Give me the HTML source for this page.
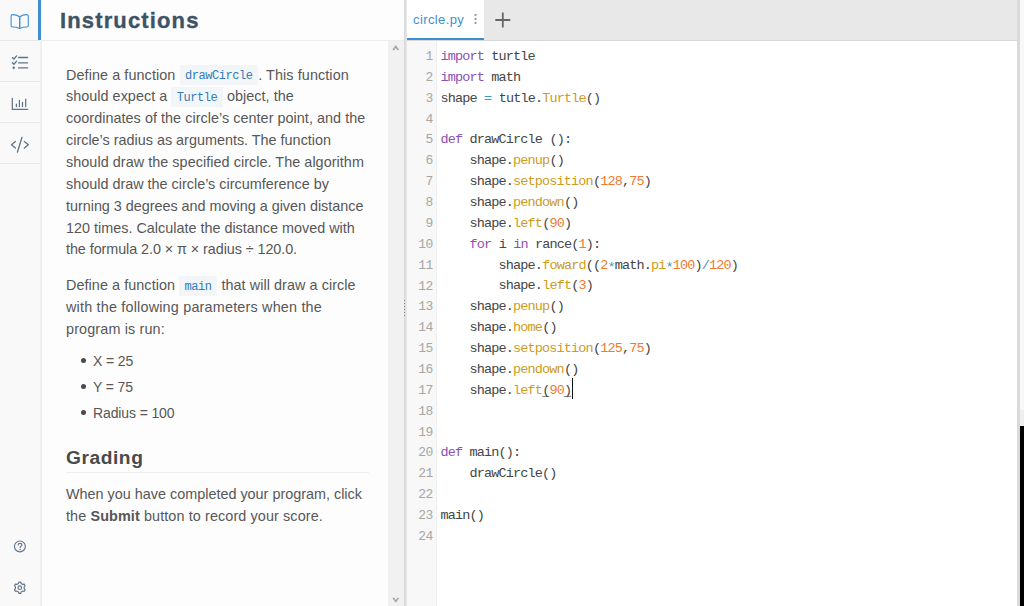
<!DOCTYPE html>
<html><head><meta charset="utf-8">
<style>
*{box-sizing:border-box;margin:0;padding:0}
html,body{width:1024px;height:606px;overflow:hidden;background:#fff;position:relative}
body{font-family:"Liberation Sans",sans-serif}
.abs{position:absolute}
/* sidebar */
#side{left:0;top:0;width:40px;height:606px;background:#f9f9f9}
#sideb{left:40px;top:41px;width:2px;height:565px;background:#efefef}
.sep{position:absolute;left:0;width:40px;height:1px;background:#e6e6e6}
#active{left:38px;top:0;width:3px;height:40px;background:#3d8fd1}
/* instructions */
#panel{left:42px;top:41px;width:346px;height:565px;background:#fdfdfd}
#phead{left:41px;top:0;width:363px;height:40px;background:#fdfdfd}
#pheadb{left:41px;top:40px;width:363px;height:1px;background:#e9eff2}
#title{left:60px;top:5.1px;font-weight:bold;font-size:22px;letter-spacing:1.14px;-webkit-text-stroke:0.35px #3e5366;color:#3e5366;line-height:32px;white-space:nowrap}
.ln.li{left:93px;font-size:14px;letter-spacing:-0.12px}
.ln{position:absolute;left:66px;font-size:14.4px;line-height:22px;height:22px;color:#575757;white-space:nowrap}
.ic{font-family:"Liberation Mono",monospace;font-size:12px;letter-spacing:-0.45px;color:#2f7bbd;background:#f3f6f9;padding:4.2px 5.8px 1.3px 5.4px}
/* scrollbar */
#track{left:388px;top:41px;width:16px;height:565px;background:#f1f1f1}
#div1{left:404px;top:0;width:3px;height:606px;background:linear-gradient(90deg,#d8d8d8,#dedede 50%,#ececec)}
/* editor */
#tabbar{left:406px;top:0;width:611px;height:40px;background:#e8e8e8}
#tabbarb{left:406px;top:40px;width:611px;height:1px;background:#d8d8d8}
#tab{left:406px;top:0;width:78px;height:40px;background:#fff}
#tabline{left:406px;top:37.5px;width:78px;height:2.5px;background:#3d8fd1}
#tabname{left:413px;top:10.6px;font-size:13px;letter-spacing:0.39px;line-height:18px;color:#3d8fd1;white-space:nowrap}
#editor{left:406px;top:41px;width:611px;height:565px;background:#fff}
#gutter{left:406px;top:41px;width:31px;height:565px;background:#f8f8f8;border-right:1px solid #efefef}
#div2{left:1017px;top:0;width:3px;height:606px;background:#dadada}
#rstrip{left:1020px;top:0;width:4px;height:606px;background:#f8f8f8}
.cl{position:absolute;left:440.6px;font-family:"Liberation Mono",monospace;font-size:13.5px;letter-spacing:-0.85px;line-height:21px;height:21px;color:#454545;white-space:pre}
.gn{position:absolute;left:406px;width:26.6px;text-align:right;font-family:"Liberation Mono",monospace;font-size:13px;letter-spacing:-0.6px;line-height:21px;height:21px;color:#a6a6a6;white-space:pre}
.bul{position:absolute;left:80.5px;width:5px;height:5px;border-radius:50%;background:#4a4a4a}
#grading{left:66px;font-weight:bold;font-size:19.2px;letter-spacing:0.55px;line-height:24px;color:#4a4a4a;white-space:nowrap}
#gradeb{left:66px;top:472px;width:303px;height:1px;background:#eeeeee}
.cur{display:inline-block;width:0;height:0;position:relative}
.cur::after{content:"";position:absolute;left:0.8px;top:-16px;width:1.2px;height:20.8px;background:#111}
.k{color:#8a50b6}
.m{color:#cc9c1c}
.n{color:#ee7b2f}
.o{color:#3b9ac4}
.st{position:relative;top:2px}
.ul{text-decoration:underline;text-decoration-color:#8a8a8a;text-underline-offset:2px;text-decoration-skip-ink:none}
</style></head>
<body>
<div id="side" class="abs"></div>
<div id="sideb" class="abs"></div>
<div class="sep" style="top:40px"></div>
<div class="sep" style="top:81px"></div>
<div class="sep" style="top:122px"></div>
<div class="sep" style="top:163px"></div>
<div id="active" class="abs"></div>

<div id="phead" class="abs"></div>
<div id="pheadb" class="abs"></div>
<div id="panel" class="abs"></div>
<div id="title" class="abs">Instructions</div>
<div class="ln" style="top:63.51px;letter-spacing:0.084px">Define a function <code class="ic">drawCircle</code>. This function</div>
<div class="ln" style="top:85.37px;letter-spacing:0.03px">should expect a <code class="ic">Turtle</code> object, the</div>
<div class="ln" style="top:107.23px;letter-spacing:0.04px">coordinates of the circle’s center point, and the</div>
<div class="ln" style="top:129.09px;letter-spacing:0px">circle’s radius as arguments. The function</div>
<div class="ln" style="top:150.95px;letter-spacing:0.048px">should draw the specified circle. The algorithm</div>
<div class="ln" style="top:172.81px;letter-spacing:0px">should draw the circle’s circumference by</div>
<div class="ln" style="top:194.67px;letter-spacing:-0.023px">turning 3 degrees and moving a given distance</div>
<div class="ln" style="top:216.53px;letter-spacing:0px">120 times. Calculate the distance moved with</div>
<div class="ln" style="top:238.39px;letter-spacing:-0.075px">the formula 2.0 × π × radius ÷ 120.0.</div>
<div class="ln" style="top:274.21px;letter-spacing:0.064px">Define a function <code class="ic">main</code> that will draw a circle</div>
<div class="ln" style="top:296.07px;letter-spacing:0.19px">with the following parameters when the</div>
<div class="ln" style="top:317.93px;letter-spacing:0.14px">program is run:</div>
<div class="ln li" style="top:350.01px">X = 25</div>
<div class="bul" style="top:358.30px"></div>
<div class="ln li" style="top:376.01px">Y = 75</div>
<div class="bul" style="top:384.30px"></div>
<div class="ln li" style="top:402.01px">Radius = 100</div>
<div class="bul" style="top:410.30px"></div>
<div class="abs" id="grading" style="top:446.28px">Grading</div>
<div class="abs" id="gradeb"></div>
<div class="ln" style="top:483.41px;letter-spacing:0px">When you have completed your program, click</div>
<div class="ln" style="top:505.27px;letter-spacing:0.105px">the <b>Submit</b> button to record your score.</div>

<div id="track" class="abs"></div>

<div id="tabbar" class="abs"></div>
<div id="tabbarb" class="abs"></div>
<div id="tab" class="abs"></div>
<div id="tabline" class="abs"></div>
<div id="tabname" class="abs">circle.py</div>
<div id="editor" class="abs"></div>
<div id="gutter" class="abs"></div>
<div id="div1" class="abs"></div>
<div id="div2" class="abs"></div>
<div id="rstrip" class="abs"></div>
<div class="gn" style="top:45.94px">1</div><div class="cl" style="top:45.80px"><span class="k">import</span> turtle</div>
<div class="gn" style="top:66.81px">2</div><div class="cl" style="top:66.67px"><span class="k">import</span> math</div>
<div class="gn" style="top:87.68px">3</div><div class="cl" style="top:87.54px">shape <span class="o">=</span> tutle.<span class="m">Turtle</span>()</div>
<div class="gn" style="top:108.55px">4</div><div class="cl" style="top:108.41px"></div>
<div class="gn" style="top:129.42px">5</div><div class="cl" style="top:129.28px"><span class="k">def</span> drawCircle ():</div>
<div class="gn" style="top:150.29px">6</div><div class="cl" style="top:150.15px">    shape.<span class="m">penup</span>()</div>
<div class="gn" style="top:171.16px">7</div><div class="cl" style="top:171.02px">    shape.<span class="m">setposition</span>(<span class="n">128</span>,<span class="n">75</span>)</div>
<div class="gn" style="top:192.03px">8</div><div class="cl" style="top:191.89px">    shape.<span class="m">pendown</span>()</div>
<div class="gn" style="top:212.90px">9</div><div class="cl" style="top:212.76px">    shape.<span class="m">left</span>(<span class="n">90</span>)</div>
<div class="gn" style="top:233.77px">10</div><div class="cl" style="top:233.63px">    <span class="k">for</span> i <span class="k">in</span> rance(<span class="n">1</span>):</div>
<div class="gn" style="top:254.64px">11</div><div class="cl" style="top:254.50px">        shape.<span class="m">foward</span>((<span class="n">2</span><span class="o st">*</span>math.<span class="m">pi</span><span class="o st">*</span><span class="n">100</span>)<span class="o">/</span><span class="n">120</span>)</div>
<div class="gn" style="top:275.51px">12</div><div class="cl" style="top:275.37px">        shape.<span class="m">left</span>(<span class="n">3</span>)</div>
<div class="gn" style="top:296.38px">13</div><div class="cl" style="top:296.24px">    shape.<span class="m">penup</span>()</div>
<div class="gn" style="top:317.25px">14</div><div class="cl" style="top:317.11px">    shape.<span class="m">home</span>()</div>
<div class="gn" style="top:338.12px">15</div><div class="cl" style="top:337.98px">    shape.<span class="m">setposition</span>(<span class="n">125</span>,<span class="n">75</span>)</div>
<div class="gn" style="top:358.99px">16</div><div class="cl" style="top:358.85px">    shape.<span class="m">pendown</span>()</div>
<div class="gn" style="top:379.86px">17</div><div class="cl" style="top:379.72px">    shape.<span class="m">left</span><span class="ul">(</span><span class="n">90</span><span class="ul">)</span><span class="cur"></span></div>
<div class="gn" style="top:400.73px">18</div><div class="cl" style="top:400.59px"></div>
<div class="gn" style="top:421.60px">19</div><div class="cl" style="top:421.46px"></div>
<div class="gn" style="top:442.47px">20</div><div class="cl" style="top:442.33px"><span class="k">def</span> main():</div>
<div class="gn" style="top:463.34px">21</div><div class="cl" style="top:463.20px">    drawCircle()</div>
<div class="gn" style="top:484.21px">22</div><div class="cl" style="top:484.07px"></div>
<div class="gn" style="top:505.08px">23</div><div class="cl" style="top:504.94px">main()</div>
<div class="gn" style="top:525.95px">24</div><div class="cl" style="top:525.81px"></div>
<svg class="abs" style="left:0;top:0" width="41" height="606" viewBox="0 0 41 606">
 <!-- book -->
 <g fill="none" stroke="#3f91d2" stroke-width="1.1" stroke-linejoin="round">
  <path d="M19.7 16.7 C17.5 15.3 15 14.6 12.8 14.6 Q11.1 14.6 11.1 16.2 L11.1 25.5 Q11.1 27 12.6 27 C15.2 27 17.6 27.4 19.7 28.4 Z"/>
  <path d="M19.7 16.7 C21.9 15.3 24.4 14.6 26.6 14.6 Q28.3 14.6 28.3 16.2 L28.3 25.5 Q28.3 27 26.8 27 C24.2 27 21.8 27.4 19.7 28.4 Z"/>
 </g>
 <!-- checklist -->
 <g fill="none" stroke="#5f7487" stroke-width="1.3" stroke-linecap="round" stroke-linejoin="round">
  <path d="M12.4 57.6 L13.9 59 L16.6 55.9"/>
  <path d="M12.4 62.8 L13.9 64.2 L16.6 61.1"/>
  <path d="M18.6 57.5 H27.6 M18.6 62.8 H27.6 M18.6 67.9 H27.6"/>
 </g>
 <circle cx="13.7" cy="67.8" r="1.2" fill="#5f7487"/>
 <!-- chart -->
 <g fill="none" stroke="#5f7487" stroke-width="1.25" stroke-linecap="round">
  <path d="M12.3 98.3 V109.4 H27.6"/>
  <path d="M16.4 104.2 V106.5 M19.4 100.4 V106.5 M22.5 102.4 V106.5 M25.7 99.2 V106.5"/>
 </g>
 <!-- code -->
 <g fill="none" stroke="#5f7487" stroke-width="1.3" stroke-linecap="round" stroke-linejoin="round">
  <path d="M15.4 141.4 L11.5 144.7 L15.4 148.1"/>
  <path d="M24.3 141.4 L28.4 144.7 L24.3 148.1"/>
  <path d="M22 137.3 L17.4 152.2"/>
 </g>
 <!-- help -->
 <g fill="none" stroke="#62778a" stroke-width="1.15" stroke-linecap="round">
  <circle cx="19.9" cy="546.4" r="5.45"/>
  <path d="M18.1 545 Q18.1 543.4 20 543.4 Q21.9 543.4 21.9 544.9 Q21.9 545.8 21 546.3 Q20.1 546.8 20.1 547.6"/>
 </g>
 <circle cx="20.1" cy="549.4" r="0.75" fill="#62778a"/>
 <!-- gear -->
 <g fill="none" stroke="#62778a" stroke-width="1.15" stroke-linejoin="round">
  <path d="M18.50 583.39 L18.85 582.08 L20.75 582.08 L21.10 583.39 L22.88 584.42 L24.19 584.07 L25.14 585.71 L24.18 586.67 L24.18 588.73 L25.14 589.69 L24.19 591.33 L22.88 590.98 L21.10 592.01 L20.75 593.32 L18.85 593.32 L18.50 592.01 L16.72 590.98 L15.41 591.33 L14.46 589.69 L15.42 588.73 L15.42 586.67 L14.46 585.71 L15.41 584.07 L16.72 584.42 Z"/>
  <circle cx="19.8" cy="587.7" r="1.8"/>
 </g>
</svg>
<!-- scroll arrows -->
<svg class="abs" style="left:388px;top:41px" width="16" height="565" viewBox="0 0 16 565">
 <path d="M4.5 8.6 L7.8 4.1 L11.1 8.6 L9.7 9.4 L7.8 6.9 L5.9 9.4 Z" fill="#a6a6a6"/>
 <path d="M4.5 557.2 L5.9 556.4 L7.8 558.9 L9.7 556.4 L11.1 557.2 L7.8 561.7 Z" fill="#a6a6a6"/>
</svg>
<!-- grip dots -->
<svg class="abs" style="left:403px;top:299px" width="4" height="18" viewBox="0 0 4 18">
 <g fill="#8a8a8a"><rect x="1" y="1" width="1" height="1"/><rect x="1" y="4" width="1" height="1"/><rect x="1" y="7" width="1" height="1"/><rect x="1" y="10" width="1" height="1"/><rect x="1" y="13" width="1" height="1"/><rect x="1" y="16" width="1" height="1"/></g>
</svg>
<!-- kebab + plus -->
<svg class="abs" style="left:406px;top:0" width="120" height="40" viewBox="0 0 120 40">
 <g fill="#9c9c9c"><circle cx="69.5" cy="15" r="1.15"/><circle cx="69.5" cy="19" r="1.15"/><circle cx="69.5" cy="23" r="1.15"/></g>
 <path d="M96.8 12.6 V27.6 M89.3 20 H104.3" stroke="#666" stroke-width="1.8"/>
</svg>
<div class="abs" style="left:1020px;top:410px;width:4px;height:16px;background:#efefef"></div>
<div class="abs" style="left:1020px;top:426px;width:4px;height:180px;background:#000"></div>

</body></html>
